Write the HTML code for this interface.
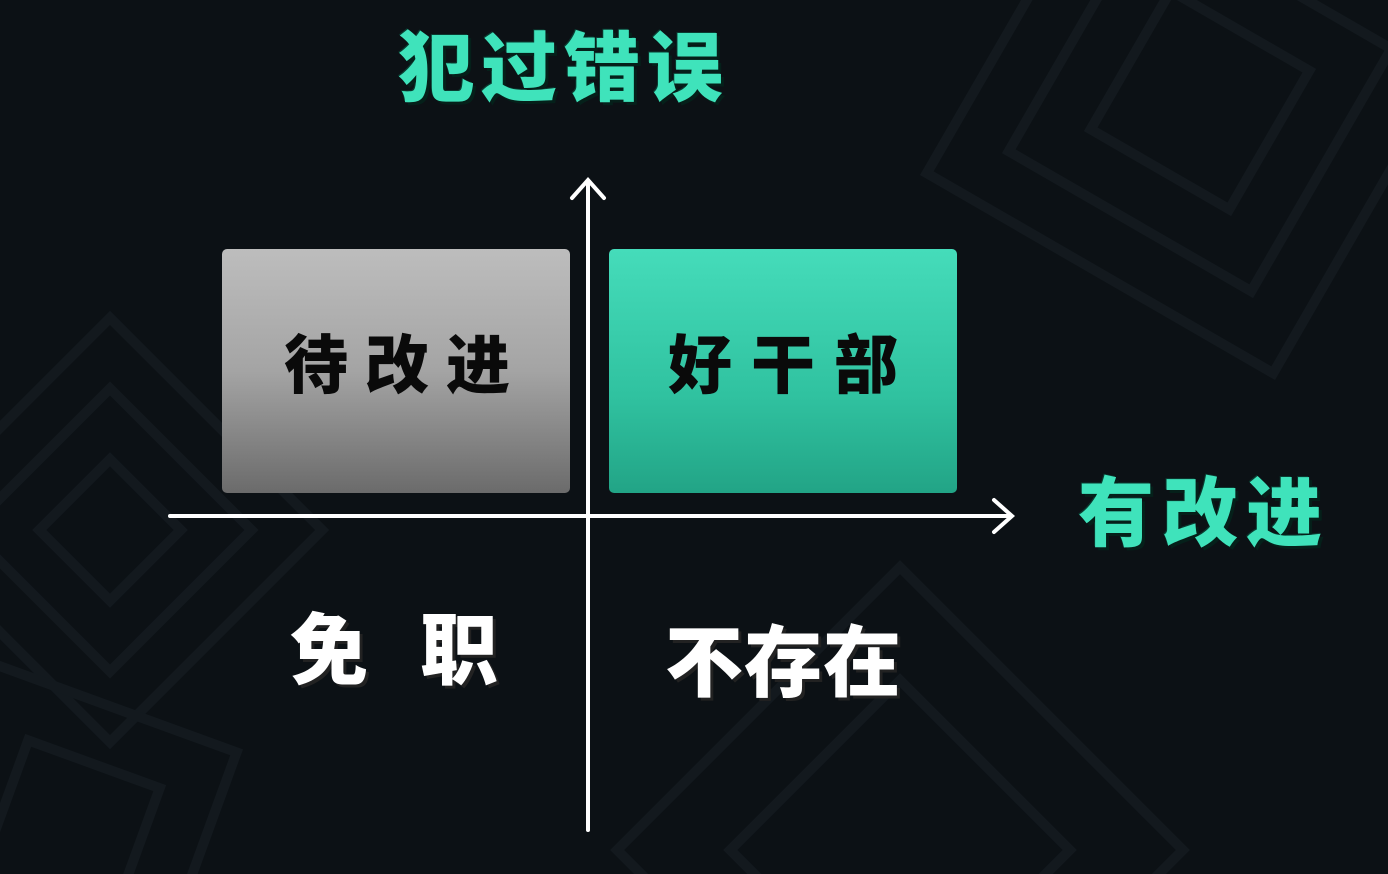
<!DOCTYPE html>
<html><head><meta charset="utf-8"><style>
html,body{margin:0;padding:0;overflow:hidden;width:1388px;height:874px;}
body{background:#0c1115;position:relative;font-family:"Liberation Sans","Noto Sans CJK SC",sans-serif;}
.bg{position:absolute;left:0;top:0;opacity:.5}
.t{position:absolute;font-weight:900;white-space:nowrap;line-height:1;}
.teal{color:#3fe3bb;text-shadow:3px 3px 0 #05201a, -1px -1px 0 #0a3a30;}
.white{color:#fff;text-shadow:3px 3px 0 #222;}
.box{position:absolute;width:348px;height:244px;border-radius:5px;}
</style></head><body>
<svg class="bg" width="1388" height="874" viewBox="0 0 1388 874">
<g fill="none" stroke="#1a2228" stroke-width="10">
<rect x="-40" y="380" width="300" height="300" transform="rotate(45 110 530)"/>
<rect x="10" y="430" width="200" height="200" transform="rotate(45 110 530)"/>
<rect x="60" y="480" width="100" height="100" transform="rotate(45 110 530)"/>
<rect x="1000" y="-100" width="400" height="400" transform="rotate(30 1200 100)"/>
<rect x="1060" y="-40" width="280" height="280" transform="rotate(30 1200 100)"/>
<rect x="1120" y="20" width="160" height="160" transform="rotate(30 1200 100)"/>
<rect x="700" y="650" width="400" height="400" transform="rotate(45 900 850)"/>
<rect x="780" y="730" width="240" height="240" transform="rotate(45 900 850)"/>
<rect x="-60" y="700" width="260" height="260" transform="rotate(20 70 830)"/>
<rect x="0" y="760" width="140" height="140" transform="rotate(20 70 830)"/>
</g></svg>
<div class="t teal" style="left:398px;top:32px;font-size:76px;letter-spacing:7px;">犯过错误</div>
<div class="box" style="left:222px;top:249px;background:linear-gradient(#bdbdbd,#a4a4a4 50%,#6b6b6b);"></div>
<div class="box" style="left:609px;top:249px;background:linear-gradient(#45dcba,#30c2a0 60%,#22a486);"></div>
<div class="t" style="left:284px;top:334px;font-size:64px;letter-spacing:17px;color:#0a0a0a;">待改进</div>
<div class="t" style="left:668px;top:334px;font-size:64px;letter-spacing:19px;color:#0a0a0a;">好干部</div>
<svg style="position:absolute;left:0;top:0" width="1388" height="874">
<g stroke="#fff" stroke-width="4" fill="none" stroke-linecap="round">
<line x1="588" y1="182" x2="588" y2="830"/>
<polyline points="572,198 588,180 604,198"/>
<line x1="170" y1="516" x2="1010" y2="516"/>
<polyline points="994,500 1012,516 994,532"/>
</g></svg>
<div class="t teal" style="left:1078px;top:477px;font-size:76px;letter-spacing:8px;">有改进</div>
<div class="t white" style="left:290px;top:612px;font-size:78px;letter-spacing:52px;">免职</div>
<div class="t white" style="left:665px;top:624px;font-size:78px;letter-spacing:1px;">不存在</div>
</body></html>
